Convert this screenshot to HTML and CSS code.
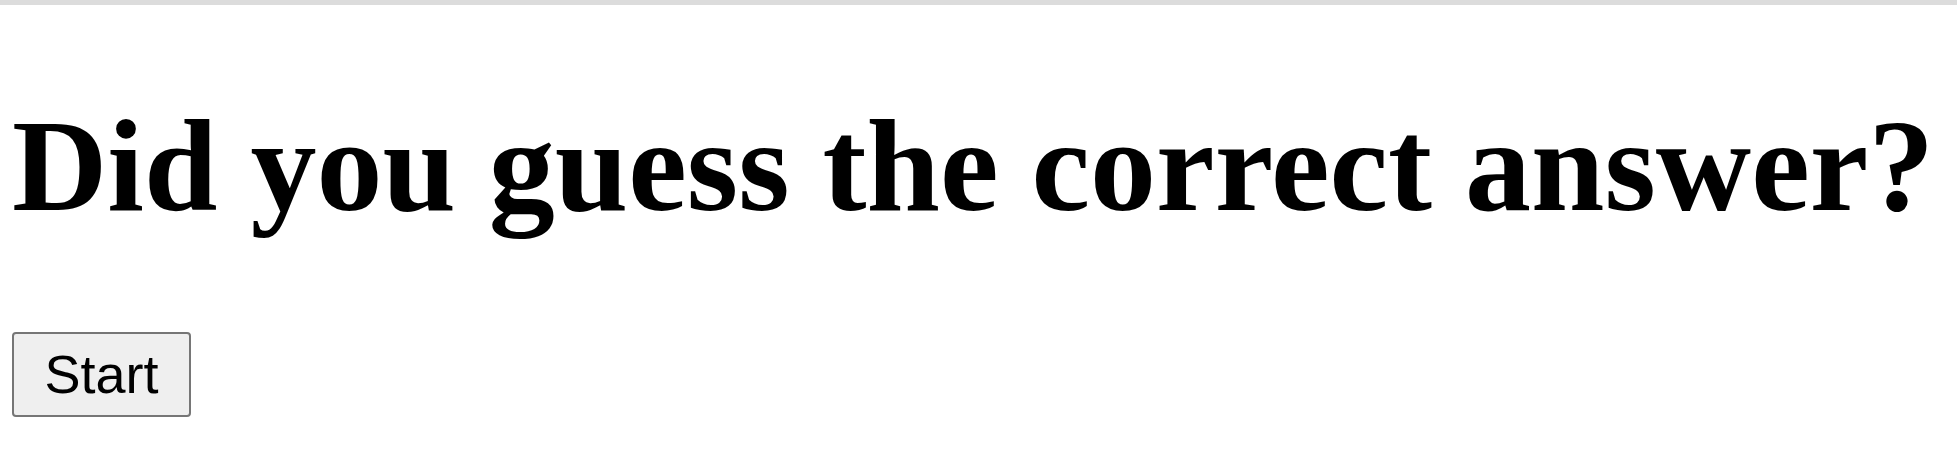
FILE: index.html
```html
<!DOCTYPE html>
<html>
<head>
<meta charset="utf-8">
<link rel="stylesheet" href="styles.css">
</head>
<body>
<div class="topbar"></div>
<main class="content">
<h1 class="title">Did you guess the correct answer?</h1>
<button class="start-btn">Start</button>
</main>
</body>
</html>
```
FILE: styles.css
```css
html, body {
  margin: 0;
  padding: 0;
  background: #ffffff;
}
.topbar {
  height: 5px;
  background: #dcdcdc;
}
.content {
  padding: 0 12px;
  display: flex;
  flex-direction: column;
  align-items: flex-start;
}
.title {
  font-family: "Liberation Serif", "Times New Roman", serif;
  font-weight: bold;
  font-size: 132px;
  line-height: 1.15;
  margin: 85px 0 0 0;
  color: #000;
  white-space: nowrap;
}
.start-btn {
  margin-top: 90px;
  width: 179px;
  height: 85px;
  font-family: "Liberation Sans", Arial, sans-serif;
  font-size: 54px;
  color: #000;
  background: #efefef;
  border: 2px solid #767676;
  border-radius: 4px;
  padding: 0;
}
```
